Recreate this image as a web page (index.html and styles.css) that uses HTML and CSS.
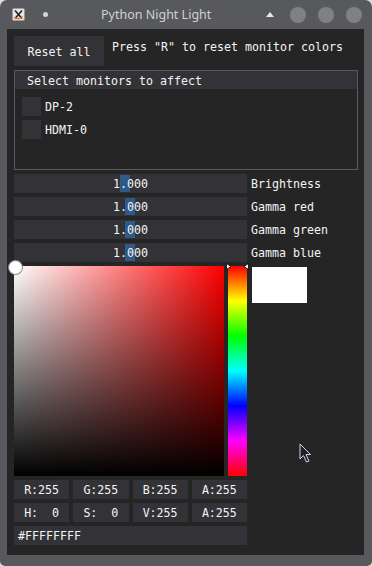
FILE: index.html
```html
<!DOCTYPE html>
<html lang="en">
<head>
  <meta charset="UTF-8">
  <title>Python Night Light</title>
  <link rel="stylesheet" href="styles.css">
</head>
<body>
  <div class="window">
    <div class="titlebar">
      <svg class="app-icon" viewBox="0 0 13 13">
        <rect x="0.5" y="0.5" width="12" height="12" rx="1.5" fill="#e9e6e2" stroke="#9a9a9a"/>
        <path d="M3 2.5 L10 10.5 M10 2.5 L3 10.5" stroke="#222" stroke-width="1.6"/>
        <path d="M2.5 9 Q6 12.5 10.5 8.5" stroke="#e0702a" stroke-width="1.4" fill="none"/>
      </svg>
      <span class="pin"></span>
      <span class="title">Python Night Light</span>
      <svg class="shade" viewBox="0 0 8 5"><path d="M0 5 L4 0 L8 5 Z" fill="#e6e6e6"/></svg>
      <span class="ctl"></span>
      <span class="ctl"></span>
      <span class="ctl"></span>
    </div>

    <div class="content">
      <div class="top-row">
        <button class="btn">Reset all</button>
        <span class="hint">Press "R" to reset monitor colors</span>
      </div>

      <div class="child">
        <div class="child-head">Select monitors to affect</div>
        <label class="check"><span class="box"></span><span class="name">DP-2</span></label>
        <label class="check"><span class="box"></span><span class="name">HDMI-0</span></label>
      </div>

      <div class="slider-row">
        <div class="slider"><span class="grab" style="left:106px"></span><span class="val">1.000</span></div>
        <span class="label">Brightness</span>
      </div>
      <div class="slider-row">
        <div class="slider"><span class="grab" style="left:111px"></span><span class="val">1.000</span></div>
        <span class="label">Gamma red</span>
      </div>
      <div class="slider-row">
        <div class="slider"><span class="grab" style="left:111px"></span><span class="val">1.000</span></div>
        <span class="label">Gamma green</span>
      </div>
      <div class="slider-row">
        <div class="slider"><span class="grab" style="left:111px"></span><span class="val">1.000</span></div>
        <span class="label">Gamma blue</span>
      </div>

      <div class="picker">
        <div class="sv"><span class="sv-cursor"></span></div>
        <div class="hue">
          <svg class="hue-arrows" viewBox="0 0 23 7">
            <path d="M0.5 0.5 L5 3.5 L0.5 6.5 Z" fill="#fff" stroke="#000" stroke-width="0.8"/>
            <path d="M22.5 0.5 L18 3.5 L22.5 6.5 Z" fill="#fff" stroke="#000" stroke-width="0.8"/>
          </svg>
        </div>
        <div class="preview"></div>
      </div>

      <div class="fields">
        <div class="field">R:255</div>
        <div class="field">G:255</div>
        <div class="field">B:255</div>
        <div class="field">A:255</div>
        <div class="field">H:  0</div>
        <div class="field">S:  0</div>
        <div class="field">V:255</div>
        <div class="field">A:255</div>
      </div>
      <div class="hex">#FFFFFFFF</div>
    </div>

    <svg class="cursor" viewBox="0 0 13 20">
      <path d="M1 1 L1 16 L4.5 12.5 L7.5 19 L10 18 L7 11.5 L11.5 11.5 Z" fill="#1b1f2e" stroke="#d6d6d6" stroke-width="1" stroke-linejoin="round"/>
    </svg>
  </div>
</body>
</html>
```

FILE: styles.css
```css
body {
  margin: 0;
  background-color: #dedede;
  font-family: "DejaVu Sans Mono", monospace;
}

.window {
  position: relative;
  width: 372px;
  height: 566px;
  background-color: #58595d;
  border-radius: 7px 7px 5px 5px;
  display: flex;
  flex-direction: column;
  overflow: hidden;
}

/* title bar */
.titlebar {
  flex: none;
  height: 29px;
  display: flex;
  align-items: center;
  padding: 0 10px 0 12px;
  font-family: "Noto Sans", sans-serif;
}

.app-icon {
  width: 13px;
  height: 13px;
}

.pin {
  width: 5px;
  height: 5px;
  border-radius: 50%;
  background-color: #d4d4d4;
  margin-left: 18px;
}

.title {
  margin-left: 53px;
  font-size: 12.5px;
  color: #d0d0d0;
}

.shade {
  margin-left: auto;
  width: 8px;
  height: 5px;
}

.ctl {
  width: 16px;
  height: 16px;
  border-radius: 50%;
  background-color: #808185;
  margin-left: 12px;
}

.shade + .ctl {
  margin-left: 16px;
}

/* window body */
.content {
  flex: 1;
  margin: 0 8px 11px 7px;
  padding: 7px 0 0 7px;
  background-color: #252525;
  color: #f4f4f4;
  font-size: 11.63px;
  line-height: 13px;
}

.top-row {
  display: flex;
  height: 30px;
}

.btn {
  width: 90px;
  height: 30px;
  padding: 2px 0 0;
  border: none;
  background-color: #333337;
  color: #f4f4f4;
  font: inherit;
}

.hint {
  margin: 5px 0 0 8px;
}

.child {
  box-sizing: border-box;
  width: 344px;
  height: 100px;
  margin-top: 4px;
  border: 1px solid #5a5a5e;
}

.child-head {
  height: 17px;
  line-height: 18px;
  padding: 1px 0 0 12px;
  background-color: #333337;
}

.check {
  display: flex;
  align-items: center;
  gap: 4px;
  height: 19px;
  margin: 4px 0 0 7px;
}

.child-head + .check {
  margin-top: 8px;
}

.box {
  width: 19px;
  height: 19px;
  background-color: #333337;
}

.name {
  padding-top: 2px;
}

/* sliders */
.slider-row {
  display: flex;
  gap: 4px;
  height: 19px;
  margin-top: 4px;
}

.slider {
  position: relative;
  width: 233px;
  background-color: #333337;
  display: flex;
  justify-content: center;
  align-items: center;
}

.grab {
  position: absolute;
  top: 1px;
  bottom: 1px;
  width: 10px;
  background-color: #2d5a86;
}

.val {
  position: relative;
  padding-top: 2px;
}

.label {
  line-height: 19px;
  padding-top: 1px;
}

/* colour picker */
.picker {
  display: flex;
  height: 210px;
  margin-top: 4px;
}

.sv {
  position: relative;
  width: 210px;
  height: 210px;
  background: linear-gradient(to top, #000, rgba(0,0,0,0)),
              linear-gradient(to right, #fff, #f00);
}

.sv-cursor {
  position: absolute;
  left: -5px;
  top: -5px;
  width: 13px;
  height: 13px;
  border-radius: 50%;
  background-color: #fff;
  box-shadow: 0 0 0 1px #8a8a8a;
}

.hue {
  position: relative;
  width: 19px;
  margin-left: 4px;
  background: linear-gradient(to bottom, #f00 0%, #ff0 16.66%, #0f0 33.33%, #0ff 50%, #00f 66.66%, #f0f 83.33%, #f00 100%);
}

.hue-arrows {
  position: absolute;
  left: -2px;
  top: -3px;
  width: 23px;
  height: 7px;
}

.preview {
  width: 55px;
  height: 36px;
  margin: 1px 0 0 5px;
  background-color: #fff;
}

.fields {
  display: grid;
  grid-template-columns: repeat(4, 1fr);
  gap: 4px;
  width: 233px;
  margin-top: 4px;
}

.field {
  height: 18px;
  line-height: 19px;
  padding-top: 1px;
  text-align: center;
  white-space: pre;
  background-color: #333337;
}

.hex {
  width: 229px;
  height: 18px;
  line-height: 19px;
  margin-top: 4px;
  padding: 1px 0 0 4px;
  background-color: #333337;
}

.cursor {
  position: absolute;
  left: 299px;
  top: 443px;
  width: 13px;
  height: 20px;
}
```
